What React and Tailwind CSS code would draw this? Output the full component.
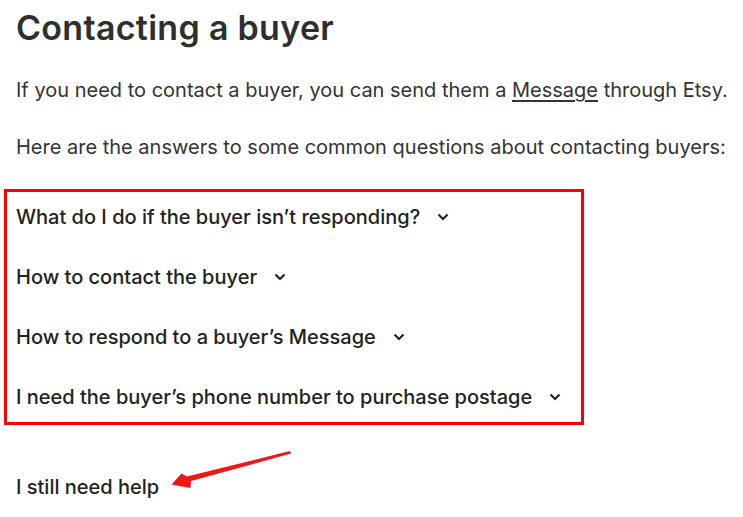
const faqs = [
  "What do I do if the buyer isn’t responding?",
  "How to contact the buyer",
  "How to respond to a buyer’s Message",
  "I need the buyer’s phone number to purchase postage",
];

const Chevron = () => (
  <svg width="12" height="8" viewBox="0 0 12 8" className="ml-[17px]">
    <path d="M1.5 1.5 L6 6 L10.5 1.5" fill="none" stroke="#222" strokeWidth="2.2" />
  </svg>
);

export default function App() {
  return (
    <div className="bg-white w-[743px] h-[517px] overflow-hidden relative text-[#222] font-['Inter',sans-serif]">
      <h1 className="pl-4 pt-[6px] text-[34px] leading-[44px] font-semibold text-[#2f2f2f] tracking-[0.3px]">
        Contacting a buyer
      </h1>
      <p className="pl-4 mt-[26px] text-[20px] leading-[28px] text-[#333]">
        If you need to contact a buyer, you can send them a{" "}
        <span className="underline underline-offset-[3px]">Message</span> through Etsy.
      </p>
      <p className="pl-4 mt-[29px] text-[20px] leading-[28px] text-[#333]">
        Here are the answers to some common questions about contacting buyers:
      </p>
      <div className="ml-1 mt-[28px] w-[580px] h-[236px] border-[3px] border-[#ff0000] pt-[1px] flex flex-col gap-[12px]">
        {faqs.map((q) => (
          <div key={q} className="flex items-center h-[48px] shrink-0 pl-[9px] text-[20px] font-medium text-[#222]">
            {q}
            <Chevron />
          </div>
        ))}
      </div>
      <div className="pl-4 mt-[48px] text-[20px] font-medium leading-[28px] text-[#222]">I still need help</div>
      <svg className="absolute left-0 top-0" width="743" height="517" viewBox="0 0 743 517">
        <path d="M290 451 L291 453.5 L191 481 L190.5 488 L171.5 484.5 L181.5 473.5 L187 476.5 Z" fill="#f01616" />
      </svg>
    </div>
  );
}
